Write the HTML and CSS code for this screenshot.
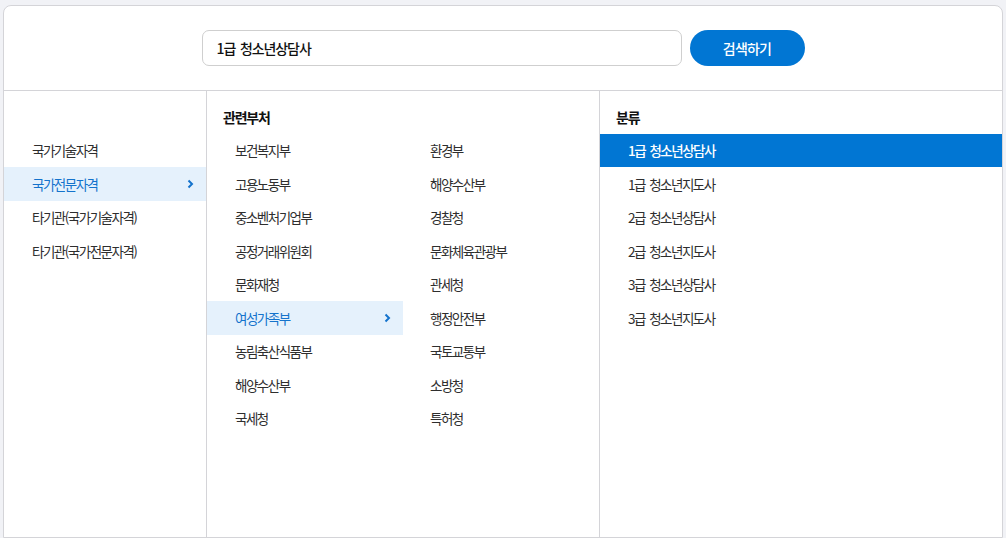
FILE: index.html
```html
<!DOCTYPE html>
<html lang="ko">
<head>
    <meta charset="UTF-8">
    <title>자격 검색</title>
    <link rel="stylesheet" href="styles.css">
</head>
<body>
    <div class="panel">
        <div class="search">
            <input type="text" class="search-input" value="1급 청소년상담사">
            <button class="search-btn">검색하기</button>
        </div>

        <div class="columns">
            <ul class="col col-type">
                <li class="item">국가기술자격</li>
                <li class="item active">국가전문자격
                    <svg class="chev" width="7" height="10" viewBox="0 0 7 10"><polyline points="1.5,1.5 5,5 1.5,8.5" fill="none" stroke="currentColor" stroke-width="2"/></svg>
                </li>
                <li class="item">타기관(국가기술자격)</li>
                <li class="item">타기관(국가전문자격)</li>
            </ul>

            <div class="col col-dept">
                <h2 class="col-title">관련부처</h2>
                <ul class="dept-grid">
                    <li class="item">보건복지부</li>
                    <li class="item">환경부</li>
                    <li class="item">고용노동부</li>
                    <li class="item">해양수산부</li>
                    <li class="item">중소벤처기업부</li>
                    <li class="item">경찰청</li>
                    <li class="item">공정거래위원회</li>
                    <li class="item">문화체육관광부</li>
                    <li class="item">문화재청</li>
                    <li class="item">관세청</li>
                    <li class="item active">여성가족부
                        <svg class="chev" width="7" height="10" viewBox="0 0 7 10"><polyline points="1.5,1.5 5,5 1.5,8.5" fill="none" stroke="currentColor" stroke-width="2"/></svg>
                    </li>
                    <li class="item">행정안전부</li>
                    <li class="item">농림축산식품부</li>
                    <li class="item">국토교통부</li>
                    <li class="item">해양수산부</li>
                    <li class="item">소방청</li>
                    <li class="item">국세청</li>
                    <li class="item">특허청</li>
                </ul>
            </div>

            <div class="col col-class">
                <h2 class="col-title">분류</h2>
                <ul class="class-list">
                    <li class="item selected">1급 청소년상담사</li>
                    <li class="item">1급 청소년지도사</li>
                    <li class="item">2급 청소년상담사</li>
                    <li class="item">2급 청소년지도사</li>
                    <li class="item">3급 청소년상담사</li>
                    <li class="item">3급 청소년지도사</li>
                </ul>
            </div>
        </div>
    </div>
</body>
</html>
```

FILE: styles.css
```css
* {
    box-sizing: border-box;
}
body {
    margin: 0;
    padding: 5px 3px 0;
    background-color: #f1f2f6;
    font-family: "Noto Sans CJK KR", "Noto Sans", sans-serif;
    color: #2e2e2e;
}
ul {
    list-style: none;
    margin: 0;
    padding: 0;
}
.panel {
    height: 533px;
    background-color: white;
    border: 1px solid #d4d4d8;
    border-radius: 8px 8px 0 0;
    display: flex;
    flex-direction: column;
}
.search {
    height: 85px;
    flex-shrink: 0;
    border-bottom: 1px solid #d4d4d8;
    display: flex;
    justify-content: center;
    align-items: center;
    gap: 8px;
}
.search-input {
    width: 480px;
    height: 36px;
    padding: 0 14px;
    border: 1px solid #cfcfcf;
    border-radius: 7px;
    font-family: inherit;
    font-size: 14px;
    font-weight: 500;
    letter-spacing: -1.1px;
    word-spacing: 2px;
    color: #111;
    outline: none;
}
.search-btn {
    width: 115px;
    height: 36px;
    border: none;
    border-radius: 18px;
    background-color: #0176d3;
    color: white;
    font-family: inherit;
    font-size: 14px;
    font-weight: 500;
    letter-spacing: -0.8px;
    cursor: pointer;
}
.columns {
    flex: 1;
    display: flex;
}
.col {
    border-right: 1px solid #d4d4d8;
}
.col:last-child {
    border-right: none;
}
.col-type {
    width: 203px;
    padding-top: 42.5px;
}
.col-dept {
    width: 393px;
}
.col-class {
    flex: 1;
}
.col-title {
    margin: 0;
    padding: 16px 0 0 16px;
    height: 42.5px;
    line-height: 20px;
    font-size: 14px;
    font-weight: 700;
    letter-spacing: -1.2px;
    color: #111;
}
.item {
    height: 33.5px;
    padding: 0 12px 0 28px;
    display: flex;
    align-items: center;
    justify-content: space-between;
    font-size: 13.5px;
    letter-spacing: -1.5px;
    word-spacing: 2px;
    white-space: nowrap;
}
.item.active {
    background-color: #e5f1fc;
    color: #1473cc;
}
.item.selected {
    background-color: #0176d3;
    color: white;
    font-weight: 500;
}
.chev {
    display: block;
}
.dept-grid {
    display: grid;
    grid-template-columns: 196px 196px;
}
.dept-grid .item:nth-child(even) {
    padding-left: 27px;
}
```
